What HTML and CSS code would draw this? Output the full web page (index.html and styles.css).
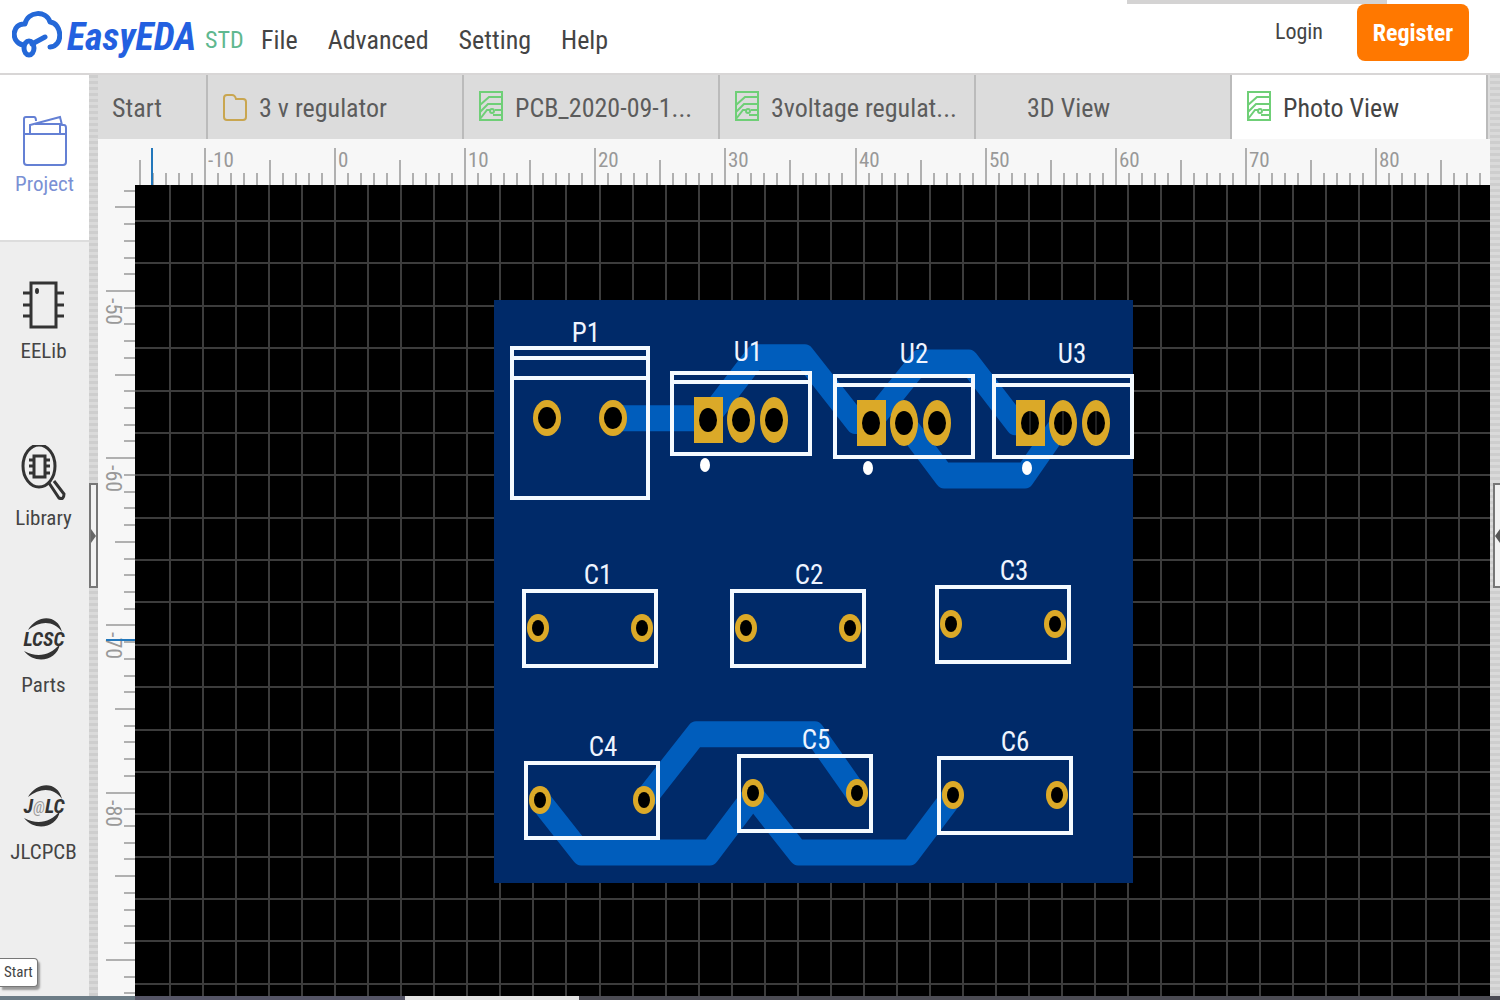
FILE: index.html
```html
<!DOCTYPE html>
<html lang="en">
<head>
<meta charset="utf-8">
<title>EasyEDA - Photo View</title>
<link rel="stylesheet" href="styles.css">
</head>
<body>
<svg class="defs" width="0" height="0" aria-hidden="true">
  <symbol id="icon-pcb" viewBox="0 0 24 30">
    <path d="M1 1H23V29H1Z M1 14L10 6H23 M1 21L9 13H23 M1 28L8 19H11 M16 19H23 M14 24H23" fill="none" stroke="currentColor" stroke-width="2"/>
    <circle cx="13" cy="20" r="2" fill="none" stroke="currentColor" stroke-width="2"/>
  </symbol>
  <symbol id="icon-swirl" viewBox="0 0 42 42">
    <path d="M5 12C14-4 35-4 39 14C31 3 18 2 5 12Z M37 26C34 43 12 47 1 33C14 40 27 38 37 26Z" fill="#333"/>
  </symbol>
  <symbol id="part-u" overflow="visible">
    <path d="M0 0H138V81H0Z M0 9H138" class="silk"/>
    <rect x="22" y="24" width="29" height="46" class="pad"/>
    <ellipse cx="69" cy="47" rx="14" ry="23" class="pad"/>
    <ellipse cx="102" cy="47" rx="14" ry="23" class="pad"/>
    <ellipse cx="36" cy="47" rx="9" ry="12"/>
    <ellipse cx="69" cy="47" rx="9" ry="12"/>
    <ellipse cx="102" cy="47" rx="9" ry="12"/>
    <ellipse cx="33" cy="92" rx="5" ry="7" fill="#fff"/>
  </symbol>
  <symbol id="part-c" overflow="visible">
    <path d="M0 0H132V75H0Z" class="silk"/>
    <ellipse cx="14" cy="37" rx="11" ry="14" class="pad"/>
    <ellipse cx="118" cy="37" rx="11" ry="14" class="pad"/>
    <ellipse cx="14" cy="37" rx="6" ry="8"/>
    <ellipse cx="118" cy="37" rx="6" ry="8"/>
  </symbol>
</svg>

<header class="topbar">
  <a class="brand" href="#">
    <svg class="cloud" width="50" height="48" viewBox="0 0 50 48" aria-hidden="true">
      <path d="M11 34C-2 31 0 12 13 13C16 0 34-1 38 11C50 12 52 35 38 36M20 33L33 26" fill="none" stroke="#2468d8" stroke-width="5" stroke-linecap="round" stroke-linejoin="round"/>
      <ellipse cx="17" cy="37" rx="5" ry="7" fill="none" stroke="#2468d8" stroke-width="5"/>
    </svg>
    <span class="wordmark">EasyEDA</span>
    <span class="edition">STD</span>
  </a>
  <nav class="menu">
    <button type="button">File</button>
    <button type="button">Advanced</button>
    <button type="button">Setting</button>
    <button type="button">Help</button>
  </nav>
  <div class="account">
    <a class="login" href="#">Login</a>
    <button type="button" class="register">Register</button>
  </div>
  <span class="window-edge"></span>
</header>

<main class="main">
  <aside class="sidebar">
    <button type="button" class="side-item active">
      <svg width="46" height="56" viewBox="0 0 46 56" fill="none" stroke="#6480d4" stroke-width="2" aria-hidden="true">
        <path d="M2 22V6Q2 4 4 4H12Q14 4 14 8M8 21V12L38 4L40 12H42Q44 12 44 15V22M13 11H38V21M2 21H44V49Q44 52 41 52H5Q2 52 2 49Z"/>
      </svg>
      <span>Project</span>
    </button>
    <button type="button" class="side-item">
      <svg width="46" height="60" viewBox="0 0 46 60" fill="none" stroke="#333" stroke-width="3" aria-hidden="true">
        <path d="M10 5H35V49H10Z M2 15H10M2 27H10M2 38H10M35 15H43M35 27H43M35 38H43"/>
        <ellipse cx="16" cy="13" rx="2" ry="3" fill="#333" stroke="none"/>
      </svg>
      <span>EELib</span>
    </button>
    <button type="button" class="side-item">
      <svg width="46" height="60" viewBox="0 0 46 60" fill="none" stroke="#333" stroke-width="3" aria-hidden="true">
        <ellipse cx="18" cy="21" rx="16" ry="21"/>
        <path d="M13 11H24V32H13Z M8 15H13M8 21H13M8 28H13M24 15H29M24 21H29M24 28H29"/>
        <path d="M28 38L38 53Q43 55 43 49L33 36"/>
      </svg>
      <span>Library</span>
    </button>
    <button type="button" class="side-item">
      <svg width="46" height="60" viewBox="0 0 46 60" aria-hidden="true">
        <use href="#icon-swirl" x="2" y="6" width="42" height="42"/>
        <text x="23" y="34" class="maker">LCSC</text>
      </svg>
      <span>Parts</span>
    </button>
    <button type="button" class="side-item">
      <svg width="46" height="60" viewBox="0 0 46 60" aria-hidden="true">
        <use href="#icon-swirl" x="2" y="6" width="42" height="42"/>
        <text x="23" y="34" class="maker">J<tspan class="at">@</tspan>LC</text>
      </svg>
      <span>JLCPCB</span>
    </button>
  </aside>

  <div class="gutter">
    <button type="button" class="handle" aria-label="Expand left panel"><svg width="5" height="14" viewBox="0 0 5 14"><path d="M0 0L5 7L0 14Z" fill="#666"/></svg></button>
  </div>

  <section class="workspace">
    <div class="tabs" role="tablist">
      <button type="button" role="tab" class="tab home">Start</button>
      <button type="button" role="tab" class="tab">
        <svg class="tab-icon folder" viewBox="0 0 24 30"><path d="M1 9V5Q1 2 4 2H9Q12 2 13 6H20Q23 6 23 9V24Q23 27 20 27H4Q1 27 1 24Z" fill="none" stroke="currentColor" stroke-width="2"/></svg>
        <span>3 v regulator</span>
      </button>
      <button type="button" role="tab" class="tab">
        <svg class="tab-icon"><use href="#icon-pcb"/></svg>
        <span>PCB_2020-09-1...</span>
      </button>
      <button type="button" role="tab" class="tab">
        <svg class="tab-icon"><use href="#icon-pcb"/></svg>
        <span>3voltage regulat...</span>
      </button>
      <button type="button" role="tab" class="tab">
        <svg class="tab-icon"></svg>
        <span>3D View</span>
      </button>
      <button type="button" role="tab" class="tab current" aria-selected="true">
        <svg class="tab-icon"><use href="#icon-pcb"/></svg>
        <span>Photo View</span>
      </button>
    </div>

    <div class="editor">
      <svg class="ruler ruler-x" id="ruler-x"></svg>
      <svg class="ruler ruler-y" id="ruler-y"></svg>
      <svg class="canvas">
        <g id="grid"></g>
        <g transform="translate(359 115)">
          <rect width="639" height="583" fill="#002a69"/>
          <g class="trace" transform="scale(1 1.3)">
            <path d="M118 91H213"/>
            <path d="M213 92L261 44H311L361 93H377"/>
            <path d="M377 94L425 48H475L521 94H535"/>
            <path d="M410 94L450 135H531L568 94"/>
            <path d="M46 385L87 425H216L259 381L304 425H416L458 382"/>
            <path d="M150 385L202 334H321L363 380"/>
          </g>
          <path d="M18 48H154V198H18Z M18 58H154M18 78H154" class="silk"/>
          <ellipse cx="53" cy="118" rx="14" ry="18" class="pad"/>
          <ellipse cx="119" cy="118" rx="14" ry="18" class="pad"/>
          <ellipse cx="53" cy="118" rx="9" ry="11"/>
          <ellipse cx="119" cy="118" rx="9" ry="11"/>
          <use href="#part-u" x="178" y="73"/>
          <use href="#part-u" x="341" y="76"/>
          <use href="#part-u" x="500" y="76"/>
          <path d="M536 111V135M569 111V135M602 111V135" stroke="#444"/>
          <use href="#part-c" x="30" y="291"/>
          <use href="#part-c" x="238" y="291"/>
          <use href="#part-c" x="443" y="287"/>
          <use href="#part-c" x="32" y="463"/>
          <use href="#part-c" x="245" y="456"/>
          <use href="#part-c" x="445" y="458"/>
          <g class="ref">
            <text x="92" y="42">P1</text>
            <text x="254" y="61">U1</text>
            <text x="420" y="63">U2</text>
            <text x="578" y="63">U3</text>
            <text x="104" y="284">C1</text>
            <text x="315" y="284">C2</text>
            <text x="520" y="280">C3</text>
            <text x="109" y="456">C4</text>
            <text x="322" y="449">C5</text>
            <text x="521" y="451">C6</text>
          </g>
        </g>
      </svg>
    </div>
  </section>

  <div class="gutter gutter-right">
    <button type="button" class="handle" aria-label="Expand right panel"><svg width="5" height="14" viewBox="0 0 5 14"><path d="M5 0L0 7L5 14Z" fill="#555"/></svg></button>
  </div>
</main>
<footer class="taskbar"></footer>
<div class="tooltip" role="tooltip">Start</div>
<script src="grid.js"></script>
</body>
</html>
```
FILE: styles.css
```css
* { box-sizing: border-box; }

body {
  margin: 0;
  height: 100vh;
  display: flex;
  flex-direction: column;
  overflow: hidden;
  background: #fff;
  color: #444;
  font-family: "Roboto Condensed", "Liberation Sans Narrow", "Liberation Sans", sans-serif;
  font-size: 26px;
}

button {
  margin: 0;
  padding: 0;
  border: 0;
  background: none;
  color: inherit;
  font: inherit;
}

a { color: inherit; text-decoration: none; }

.defs { position: absolute; }

/* top bar */
.topbar {
  position: relative;
  flex: none;
  height: 75px;
  display: flex;
  align-items: flex-start;
  padding: 0 31px 0 12px;
  border-bottom: 2px solid #d8d6d6;
}

.brand {
  display: flex;
  align-items: center;
  height: 76px;
  padding-bottom: 2px;
}

.cloud { margin-bottom: 4px; }

.wordmark {
  margin-left: 5px;
  width: 131px;
  color: #2360e0;
  font-size: 38px;
  font-weight: bold;
  font-style: italic;
}

.edition {
  margin: 6px 0 0 7px;
  width: 38px;
  color: #5fb88f;
  font-size: 24px;
}

.menu {
  display: flex;
  gap: 30px;
  height: 80px;
  margin-left: 18px;
}

.account {
  display: flex;
  align-items: center;
  gap: 34px;
  margin: 4px 0 0 auto;
  font-size: 24px;
}

.login { padding-bottom: 2px; font-size: 22px; }

.register {
  width: 112px;
  height: 57px;
  border-radius: 8px;
  background: #ff7800;
  color: #fff;
  font-weight: bold;
}

.window-edge {
  position: absolute;
  top: 0;
  right: 113px;
  width: 260px;
  height: 4px;
  background: #d4d3d3;
  z-index: -1;
}

/* main area */
.main {
  flex: 1;
  min-height: 0;
  display: flex;
}

.sidebar {
  flex: none;
  width: 89px;
  background: #eee;
}

.side-item {
  width: 100%;
  height: 167px;
  display: flex;
  flex-direction: column;
  align-items: center;
  padding: 36px 2px 0 0;
  font-size: 21px;
  line-height: 26px;
}

.side-item svg { height: 60px; }
.side-item.active { padding-right: 0; background: #fff; color: #7a90d4; border-bottom: 2px solid #ddd; }

.maker {
  font-size: 20px;
  font-weight: bold;
  font-style: italic;
  text-anchor: middle;
  fill: #333;
}

.maker .at { font-size: 16px; font-weight: normal; fill: #999; }

.gutter {
  flex: none;
  width: 9px;
  display: flex;
  align-items: center;
  background: repeating-linear-gradient(#cecece 0 3px, #dadada 3px 6px);
}

.gutter-right { width: 10px; padding-left: 3px; }

.handle {
  width: 9px;
  height: 105px;
  display: flex;
  align-items: center;
  border: 2px solid #777;
  background: #f2f2f2;
}

.handle svg { flex: none; }

.workspace {
  flex: 1;
  min-width: 0;
  display: flex;
  flex-direction: column;
}

.tabs {
  flex: none;
  height: 64px;
  display: flex;
  padding-right: 2px;
  background: #dcdcdc;
}

.tab {
  flex: 1;
  min-width: 0;
  display: flex;
  align-items: center;
  gap: 12px;
  padding: 2px 0 0 15px;
  border-right: 2px solid #bbb;
  color: #5c5c5c;
  white-space: nowrap;
}

.tab.home { flex: none; width: 110px; padding-left: 14px; }
.tab.current { background: #fff; color: #444; }

.tab-icon {
  flex: none;
  width: 24px;
  height: 30px;
  margin-bottom: 4px;
  color: #6fcf77;
}

.tab-icon.folder { margin-bottom: 0; color: #c9a650; }

.editor {
  flex: 1;
  min-height: 0;
  display: grid;
  grid-template-columns: 37px 1fr;
  grid-template-rows: 46px 1fr;
  background: #f7f7f7;
}

.ruler { display: block; width: 100%; height: 100%; font-size: 21px; }
.ruler line { stroke: #b0b0b0; stroke-width: 2; }
.ruler text { fill: #999; }
.ruler .cursor { stroke: #2277bb; }
.ruler-x { grid-column: 1 / 3; }
.ruler-y { font-size: 22px; }

.canvas { display: block; width: 100%; height: 100%; background: #000; }
.canvas line { stroke: #3c3c3c; stroke-width: 2; }

.silk { fill: none; stroke: #f4faff; stroke-width: 4; }
.pad { fill: #dba928; }
.trace { fill: none; stroke: #005dbc; stroke-width: 20; stroke-linejoin: round; }

.ref {
  font-size: 27px;
  text-anchor: middle;
  fill: #eef4ff;
}

.taskbar {
  flex: none;
  height: 4px;
  background: linear-gradient(90deg, #6c7c86 0 135px, #556 135px 405px, #e4e4e4 405px 579px, #4c4c54 579px);
}

.tooltip {
  position: absolute;
  left: 0;
  bottom: 13px;
  width: 38px;
  height: 29px;
  padding-left: 4px;
  border: 1px solid #777;
  border-left: 0;
  border-radius: 0 4px 4px 0;
  background: #fff;
  box-shadow: 2px 3px 2px #999;
  font-size: 15px;
  line-height: 27px;
}
```
FILE: grid.js
```js
const NS = "http://www.w3.org/2000/svg";

function line(parent, x1, y1, x2, y2, cls) {
  const el = document.createElementNS(NS, "line");
  Object.entries({ x1, y1, x2, y2 }).forEach(([k, v]) => el.setAttribute(k, v));
  if (cls) el.setAttribute("class", cls);
  parent.appendChild(el);
}

function label(parent, text, transform) {
  const el = document.createElementNS(NS, "text");
  el.setAttribute("transform", transform);
  el.textContent = text;
  parent.appendChild(el);
}

const rulerX = document.getElementById("ruler-x");
const rulerY = document.getElementById("ruler-y");
const grid = document.getElementById("grid");

// tick length: ten units, five units, one unit
const tick = (i, big, mid, small) => (i % 10 === 0 ? big : i % 5 === 0 ? mid : small);

function draw() {
  [rulerX, rulerY, grid].forEach((el) => el.replaceChildren());
  const width = rulerX.getBoundingClientRect().width;
  const height = rulerY.getBoundingClientRect().height;

  for (let i = -5, x = 42; x < width; i++, x = Math.round(107 + i * 13.01)) {
    line(rulerX, x, 46 - tick(i, 37, 25, 12), x, 46);
    if (i % 10 === 0 && x < width - 40) label(rulerX, String(i - 10), `translate(${x + 3} 28)`);
  }
  line(rulerX, 54, 9, 54, 46, "cursor");

  for (let i = -6, y = 6; y < height; i++, y = Math.round(106 + i * 16.72)) {
    line(rulerY, 37 - tick(i, 29, 20, 11), y, 37, y);
    if (i % 10 === 0 && y < height - 40) label(rulerY, String(-50 - i), `translate(8 ${y + 7}) rotate(90)`);
  }
  line(rulerY, 8, 455, 37, 455, "cursor");

  for (let x = 35, i = 1; x < width; x = Math.round(35 + i++ * 33.04)) line(grid, x, 0, x, height);
  for (let y = 36, i = 1; y < height; y = Math.round(36 + i++ * 42.38)) line(grid, 0, y, width, y);
}

draw();
window.addEventListener("resize", draw);
```
